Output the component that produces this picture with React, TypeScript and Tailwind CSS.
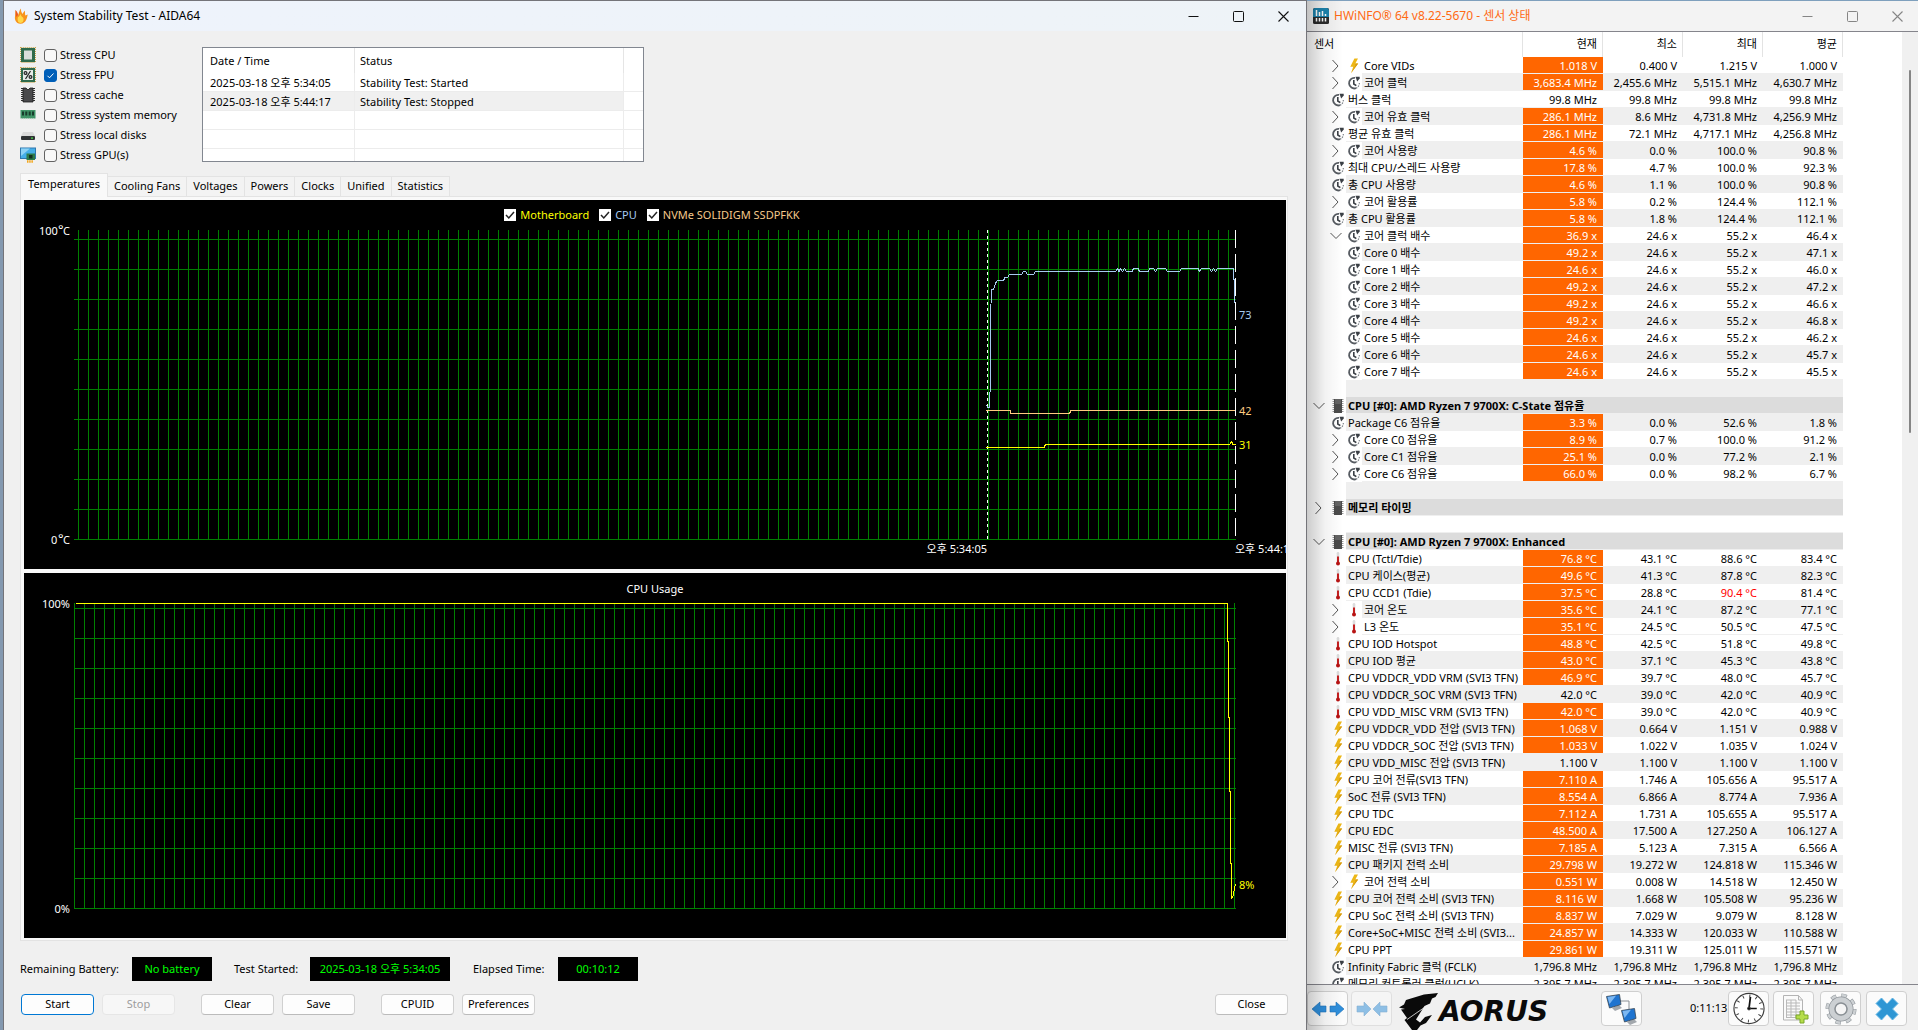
import React from 'react';
import clsx from 'clsx';

type IconKind = 'clock' | 'bolt' | 'temp';

type SensorRow = {
    kind: 'sensor' | 'group' | 'blank';
    name?: string;
    icon?: IconKind;
    nested?: boolean;
    expander?: 'open' | 'closed';
    shaded?: boolean;
    values?: string[];
    plain?: boolean;
    hotMax?: boolean;
};

const s = (
    icon: IconKind,
    name: string,
    values: string,
    shaded: boolean,
    extra: Partial<SensorRow> = {}
): SensorRow => ({ kind: 'sensor', icon, name, values: values.split('|'), shaded, ...extra });

const closed: Partial<SensorRow> = { nested: true, expander: 'closed' };
const nested: Partial<SensorRow> = { nested: true };
const plain: Partial<SensorRow> = { plain: true };

const rows: SensorRow[] = [
    s('bolt', 'Core VIDs', '1.018 V|0.400 V|1.215 V|1.000 V', false, closed),
    s('clock', '코어 클럭', '3,683.4 MHz|2,455.6 MHz|5,515.1 MHz|4,630.7 MHz', true, closed),
    s('clock', '버스 클럭', '99.8 MHz|99.8 MHz|99.8 MHz|99.8 MHz', false, plain),
    s('clock', '코어 유효 클럭', '286.1 MHz|8.6 MHz|4,731.8 MHz|4,256.9 MHz', true, closed),
    s('clock', '평균 유효 클럭', '286.1 MHz|72.1 MHz|4,717.1 MHz|4,256.8 MHz', false),
    s('clock', '코어 사용량', '4.6 %|0.0 %|100.0 %|90.8 %', true, closed),
    s('clock', '최대 CPU/스레드 사용량', '17.8 %|4.7 %|100.0 %|92.3 %', false),
    s('clock', '총 CPU 사용량', '4.6 %|1.1 %|100.0 %|90.8 %', true),
    s('clock', '코어 활용률', '5.8 %|0.2 %|124.4 %|112.1 %', false, closed),
    s('clock', '총 CPU 활용률', '5.8 %|1.8 %|124.4 %|112.1 %', true),
    s('clock', '코어 클럭 배수', '36.9 x|24.6 x|55.2 x|46.4 x', false, { nested: true, expander: 'open' }),
    s('clock', 'Core 0 배수', '49.2 x|24.6 x|55.2 x|47.1 x', true, nested),
    s('clock', 'Core 1 배수', '24.6 x|24.6 x|55.2 x|46.0 x', false, nested),
    s('clock', 'Core 2 배수', '49.2 x|24.6 x|55.2 x|47.2 x', true, nested),
    s('clock', 'Core 3 배수', '49.2 x|24.6 x|55.2 x|46.6 x', false, nested),
    s('clock', 'Core 4 배수', '49.2 x|24.6 x|55.2 x|46.8 x', true, nested),
    s('clock', 'Core 5 배수', '24.6 x|24.6 x|55.2 x|46.2 x', false, nested),
    s('clock', 'Core 6 배수', '24.6 x|24.6 x|55.2 x|45.7 x', true, nested),
    s('clock', 'Core 7 배수', '24.6 x|24.6 x|55.2 x|45.5 x', false, nested),
    { kind: 'blank', shaded: true },
    { kind: 'group', name: 'CPU [#0]: AMD Ryzen 7 9700X: C-State 점유율', expander: 'open' },
    s('clock', 'Package C6 점유율', '3.3 %|0.0 %|52.6 %|1.8 %', true),
    s('clock', 'Core C0 점유율', '8.9 %|0.7 %|100.0 %|91.2 %', false, closed),
    s('clock', 'Core C1 점유율', '25.1 %|0.0 %|77.2 %|2.1 %', true, closed),
    s('clock', 'Core C6 점유율', '66.0 %|0.0 %|98.2 %|6.7 %', false, closed),
    { kind: 'blank', shaded: true },
    { kind: 'group', name: '메모리 타이밍', expander: 'closed' },
    { kind: 'blank', shaded: false },
    { kind: 'group', name: 'CPU [#0]: AMD Ryzen 7 9700X: Enhanced', expander: 'open' },
    s('temp', 'CPU (Tctl/Tdie)', '76.8 °C|43.1 °C|88.6 °C|83.4 °C', false),
    s('temp', 'CPU 케이스(평균)', '49.6 °C|41.3 °C|87.8 °C|82.3 °C', true),
    s('temp', 'CPU CCD1 (Tdie)', '37.5 °C|28.8 °C|90.4 °C|81.4 °C', false, { hotMax: true }),
    s('temp', '코어 온도', '35.6 °C|24.1 °C|87.2 °C|77.1 °C', true, closed),
    s('temp', 'L3 온도', '35.1 °C|24.5 °C|50.5 °C|47.5 °C', false, closed),
    s('temp', 'CPU IOD Hotspot', '48.8 °C|42.5 °C|51.8 °C|49.8 °C', false),
    s('temp', 'CPU IOD 평균', '43.0 °C|37.1 °C|45.3 °C|43.8 °C', true),
    s('temp', 'CPU VDDCR_VDD VRM (SVI3 TFN)', '46.9 °C|39.7 °C|48.0 °C|45.7 °C', false),
    s('temp', 'CPU VDDCR_SOC VRM (SVI3 TFN)', '42.0 °C|39.0 °C|42.0 °C|40.9 °C', true, plain),
    s('temp', 'CPU VDD_MISC VRM (SVI3 TFN)', '42.0 °C|39.0 °C|42.0 °C|40.9 °C', false),
    s('bolt', 'CPU VDDCR_VDD 전압 (SVI3 TFN)', '1.068 V|0.664 V|1.151 V|0.988 V', true),
    s('bolt', 'CPU VDDCR_SOC 전압 (SVI3 TFN)', '1.033 V|1.022 V|1.035 V|1.024 V', false),
    s('bolt', 'CPU VDD_MISC 전압 (SVI3 TFN)', '1.100 V|1.100 V|1.100 V|1.100 V', true, plain),
    s('bolt', 'CPU 코어 전류(SVI3 TFN)', '7.110 A|1.746 A|105.656 A|95.517 A', false),
    s('bolt', 'SoC 전류 (SVI3 TFN)', '8.554 A|6.866 A|8.774 A|7.936 A', true),
    s('bolt', 'CPU TDC', '7.112 A|1.731 A|105.655 A|95.517 A', false),
    s('bolt', 'CPU EDC', '48.500 A|17.500 A|127.250 A|106.127 A', true),
    s('bolt', 'MISC 전류 (SVI3 TFN)', '7.185 A|5.123 A|7.315 A|6.566 A', false),
    s('bolt', 'CPU 패키지 전력 소비', '29.798 W|19.272 W|124.818 W|115.346 W', true),
    s('bolt', '코어 전력 소비', '0.551 W|0.008 W|14.518 W|12.450 W', false, closed),
    s('bolt', 'CPU 코어 전력 소비 (SVI3 TFN)', '8.116 W|1.668 W|105.508 W|95.236 W', true),
    s('bolt', 'CPU SoC 전력 소비 (SVI3 TFN)', '8.837 W|7.029 W|9.079 W|8.128 W', false),
    s('bolt', 'Core+SoC+MISC 전력 소비 (SVI3...', '24.857 W|14.333 W|120.033 W|110.588 W', true),
    s('bolt', 'CPU PPT', '29.861 W|19.311 W|125.011 W|115.571 W', false),
    s('clock', 'Infinity Fabric 클럭 (FCLK)', '1,796.8 MHz|1,796.8 MHz|1,796.8 MHz|1,796.8 MHz', true, plain),
    s('clock', '메모리 컨트롤러 클럭(UCLK)', '2,395.7 MHz|2,395.7 MHz|2,395.7 MHz|2,395.7 MHz', false, plain),
];

const range = (from: number, to: number, step: number) => {
    const out: number[] = [];
    for (let v = from; v <= to; v += step) out.push(v);
    return out;
};

/* ---------- sensor icons ---------- */

function SensorIcon({ kind }: { kind: IconKind }) {
    if (kind === 'clock') {
        return (
            <svg className="h-4 w-4 shrink-0" viewBox="0 0 16 16" fill="none">
                <path d="M9 2.9A5.300 5.300 0 1 0 10 13.200" stroke="#565b61" strokeWidth="1.8" />
                <path d="M10 13.2A5.300 5.300 0 0 0 13.300 8" stroke="#7d8288" strokeWidth="1.2" strokeDasharray="1.5 1" />
                <path d="M7.800 5V9L10.300 10.600" stroke="#3a3f45" strokeWidth="1.6" />
                <path d="M9.500 1.800h4.200v1.600L11.200 6.400z" fill="#3a3f45" />
            </svg>
        );
    }
    if (kind === 'bolt') {
        return (
            <svg className="h-4 w-4 shrink-0" viewBox="0 0 16 16">
                <path d="M8.4 0.500H12L9.300 5.600H12.200L5 15.200 7.200 8.800H4.300z" fill="#edb716" />
                <path d="M9.300 5.600H12.200L5 15.200 9.500 7.200z" fill="#d79a10" />
            </svg>
        );
    }
    return (
        <svg className="h-4 w-4 shrink-0" viewBox="0 0 16 16">
            <rect x="6.7" y="1" width="2.6" height="11" rx="1.3" fill="#dcdcdc" />
            <rect x="7" y="5.5" width="2" height="7" fill="#c42020" />
            <circle cx="8" cy="12.6" r="2" fill="#b81414" />
        </svg>
    );
}

function Expander({ open }: { open: boolean }) {
    return (
        <svg className="h-4 w-3 shrink-0" viewBox="0 0 12 16" fill="none" stroke="#555">
            {open ? <path d="M0.5 5L6 10.5 11.5 5" /> : <path d="M2.5 2L8 8 2.5 14" />}
        </svg>
    );
}

function ChipIcon() {
    return (
        <svg className="h-4 w-4 shrink-0" viewBox="0 0 16 16">
            <path d="M3.5 1v14M12.5 1v14" stroke="#999" strokeWidth="2" strokeDasharray="1 1" />
            <rect x="4" y="1" width="8" height="14" fill="#4b4b4b" />
            <rect x="5" y="1" width="6" height="5" fill="#636363" />
        </svg>
    );
}

/* ---------- stress option icons ---------- */

function StressIcon({ name }: { name: string }) {
    return (
        <svg className="h-4 w-4 shrink-0" viewBox="0 0 16 16">
            {(name === 'cpu' || name === 'fpu') && (
                <>
                    <rect x="0.7" y="0.7" width="14.6" height="14.6" fill="none" stroke="#c9a34a" strokeWidth="1.4" strokeDasharray="1 1" />
                    <rect x="1" y="1" width="14" height="14" fill="#2f6b4c" />
                    {name === 'cpu' && <rect x="4" y="3.5" width="8" height="9" fill="#d9dedb" />}
                    {name === 'fpu' && (
                        <>
                            <rect x="3" y="3" width="10" height="10" fill="#e6ebe6" />
                            <g fill="none" stroke="#222" strokeWidth="1.2">
                                <circle cx="5.5" cy="6" r="1.4" />
                                <circle cx="10.5" cy="10" r="1.4" />
                                <path d="M10.5 4L5.5 12" />
                            </g>
                        </>
                    )}
                </>
            )}
            {name === 'cache' && (
                <>
                    <path d="M2 1v14M14 1v14" stroke="#333" strokeWidth="2" strokeDasharray="1 1" />
                    <path d="M3 1h3l2 2 2-2h3v14H3z" fill="#4a4a4c" stroke="#1c1c1c" strokeWidth="0.8" />
                </>
            )}
            {name === 'memory' && (
                <>
                    <rect x="0.5" y="3" width="15" height="8.5" fill="#3f9467" />
                    <path d="M2 4.5h2v4H2zM5.3 4.5h2v4h-2zM8.7 4.5h2v4h-2zM12 4.5h2v4h-2z" fill="#173c2b" />
                    <path d="M1 11.7h14" stroke="#b9d6c5" strokeDasharray="1 1" />
                </>
            )}
            {name === 'disk' && (
                <>
                    <path d="M3 5h10l2 4H1z" fill="#dadada" />
                    <rect x="1" y="9" width="14" height="4" rx="1" fill="#2f3234" />
                    <rect x="11" y="10.5" width="2" height="1.2" fill="#4be04b" />
                </>
            )}
            {name === 'gpu' && (
                <>
                    <rect x="0.5" y="1" width="15" height="10.5" fill="#45aee8" stroke="#2f77ad" />
                    <path d="M1 1.5h9L1 9z" fill="#8ed2f5" />
                    <rect x="6.5" y="6.5" width="8.5" height="6.5" fill="#2c7a4b" />
                    <rect x="9" y="8" width="3.5" height="3.5" fill="#13301f" />
                    <path d="M7 14.5h6" stroke="#f2a71c" strokeWidth="2.5" strokeDasharray="1.5 0.7" />
                </>
            )}
        </svg>
    );
}

const stressOptions = [
    { id: 'cpu', label: 'Stress CPU', on: false },
    { id: 'fpu', label: 'Stress FPU', on: true },
    { id: 'cache', label: 'Stress cache', on: false },
    { id: 'memory', label: 'Stress system memory', on: false },
    { id: 'disk', label: 'Stress local disks', on: false },
    { id: 'gpu', label: 'Stress GPU(s)', on: false },
];

function StressOption({ id, label, on }: { id: string; label: string; on: boolean }) {
    return (
        <div className="flex h-5 items-center">
            <StressIcon name={id} />
            <span className="relative ml-2 flex">
                <input
                    id={id}
                    type="checkbox"
                    defaultChecked={on}
                    className="peer h-[13px] w-[13px] appearance-none rounded-[3px] border border-[#626262] bg-[#f8f8f8] checked:border-[#005fb8] checked:bg-[#005fb8]"
                />
                <svg className="pointer-events-none absolute inset-0 hidden h-[13px] w-[13px] peer-checked:block" viewBox="0 0 13 13" fill="none" stroke="#fff">
                    <path d="M3.5 6.8l2 2 4-4.3" />
                </svg>
            </span>
            <label htmlFor={id} className="ml-[3px] pt-px">{label}</label>
        </div>
    );
}

function WindowControls({ dim }: { dim?: boolean }) {
    return (
        <div className={clsx('flex', dim ? 'text-[#858585]' : 'text-[#111]')}>
            <button aria-label="Minimize" className="flex h-7 w-[45px] items-center justify-center">
                <svg width="11" height="11" viewBox="0 0 11 11" stroke="currentColor"><path d="M0.5 5.5h10" /></svg>
            </button>
            <button aria-label="Maximize" className="flex h-7 w-[45px] items-center justify-center">
                <svg width="11" height="11" viewBox="0 0 11 11" fill="none" stroke="currentColor"><rect x="0.5" y="0.5" width="10" height="10" rx="1" /></svg>
            </button>
            <button aria-label="Close window" className="flex h-7 w-[45px] items-center justify-center">
                <svg width="11" height="11" viewBox="0 0 11 11" stroke="currentColor" strokeWidth="1.1"><path d="M0.5 0.5l10 10M10.5 0.5l-10 10" /></svg>
            </button>
        </div>
    );
}

/* ---------- charts ---------- */

const cpuTrace =
    '986.5,405.5 988,407.5 989.5,407.5 990.5,378 990.5,319 991.5,289.5 993.5,289.5 995,285 996,282.5 997.5,280.5 1003.5,280.5 1005,277.5 1007.5,277.5 1009.5,274.5 1021.5,274.5 1023.5,271.5 1025.5,271.5 1027.5,274.5 1033.5,274.5 1035.5,271.5 1115.5,271.5 1117.5,268.5 1119,271.5 1120.5,268.5 1122.5,271.5 1124.5,268.5 1126.5,271.5 1132,271.5 1133.5,268.5 1138,268.5 1139.5,271.5 1148,271.5 1150,268.5 1153.5,268.5 1155.5,271.5 1157.5,268.5 1165.5,268.5 1167.5,271.5 1179.5,271.5 1181.5,268.5 1198,268.5 1199.5,271.5 1201.5,268.5 1209.5,268.5 1211.5,271.5 1213.5,268.5 1215.5,271.5 1217.5,268.5 1233.5,268.5 1233.5,279.5 1234.5,280 1234.5,302.5';

function TemperatureChart() {
    return (
        <div className="overflow-hidden bg-black">
            <div className="flex h-6 items-end justify-center gap-2.5 pr-1.5 pb-px">
                <ChartToggle label="Motherboard" className="text-[#ffff00]" />
                <ChartToggle label="CPU" className="text-[#a6caf0]" />
                <ChartToggle label="NVMe SOLIDIGM SSDPFKK" className="text-[#f5c98b]" />
            </div>
            <svg className="block h-auto w-full overflow-visible" viewBox="24 224 1262 345" fontSize="11">
                <g stroke="#008000" shapeRendering="crispEdges">
                    {range(78, 1228, 10).map((x) => (
                        <line key={x} x1={x + 0.5} x2={x + 0.5} y1="230" y2="540" />
                    ))}
                    {range(239, 539, 30).map((y) => (
                        <line key={y} x1="74" x2="1236" y1={y + 0.5} y2={y + 0.5} />
                    ))}
                </g>
                <g stroke="#fff" shapeRendering="crispEdges">
                    <line x1="987.5" x2="987.5" y1="230" y2="540" strokeDasharray="3 3" />
                    <line x1="1235.5" x2="1235.5" y1="230" y2="540" strokeDasharray="18 6" />
                </g>
                <g fill="none" shapeRendering="crispEdges">
                    <polyline points={cpuTrace} stroke="#a6caf0" />
                    <polyline points="986,410.5 1010,410.5 1011,413.5 1069.5,413.5 1071,410.5 1235,410.5" stroke="#ffcc80" />
                    <polyline points="986,447.5 1044,447.5 1045.5,444.5 1229.5,444.5 1231.5,441.5 1233,444.5 1236,444.5" stroke="#ffff00" />
                </g>
                <g fill="#fff">
                    <text x="39" y="235">100<tspan x="58" y="234" fontSize="13">°</tspan><tspan x="63" y="235">C</tspan></text>
                    <text x="51" y="544">0<tspan x="58" y="543" fontSize="13">°</tspan><tspan x="63" y="544">C</tspan></text>
                    <text x="987" y="553" textAnchor="end">오후 5:34:05</text>
                    <text x="1235" y="553">오후 5:44:17</text>
                </g>
                <text x="1239" y="319" fill="#a6caf0">73</text>
                <text x="1239" y="415" fill="#ffcc80">42</text>
                <text x="1239" y="449" fill="#ffff00">31</text>
            </svg>
        </div>
    );
}

function ChartToggle({ label, className }: { label: string; className: string }) {
    return (
        <label className={clsx('flex h-4 items-center gap-1', className)}>
            <span className="relative flex">
                <input type="checkbox" defaultChecked className="peer h-3 w-3 appearance-none bg-white" />
                <svg className="pointer-events-none absolute inset-0 hidden h-3 w-3 peer-checked:block" viewBox="0 0 12 12" fill="none" stroke="#222" strokeWidth="1.5">
                    <path d="M2 6l2.8 3L10 3" />
                </svg>
            </span>
            {label}
        </label>
    );
}

function UsageChart() {
    return (
        <div className="overflow-hidden bg-black">
            <h2 className="flex h-6 items-end justify-center text-white">CPU Usage</h2>
            <svg className="block h-auto w-full overflow-visible" viewBox="24 597 1262 341" fontSize="11">
                <g stroke="#008000" shapeRendering="crispEdges">
                    {range(74, 1234, 10).map((x) => (
                        <line key={x} x1={x + 0.5} x2={x + 0.5} y1="603" y2="909" />
                    ))}
                    {range(608, 908, 30).map((y) => (
                        <line key={y} x1="74" x2="1236" y1={y + 0.5} y2={y + 0.5} />
                    ))}
                </g>
                <polyline
                    points="76,603.5 1227.5,603.5 1227.5,641 1228.5,642 1228.5,717 1229.5,718 1229.5,791 1230.5,792 1230.5,863 1231.5,864 1231.5,899 1233.5,895 1234.5,888 1235.5,884"
                    fill="none"
                    stroke="#ffff00"
                    shapeRendering="crispEdges"
                />
                <text x="70" y="608" fill="#fff" textAnchor="end">100%</text>
                <text x="70" y="913" fill="#fff" textAnchor="end">0%</text>
                <text x="1239" y="889" fill="#ffff00">8%</text>
            </svg>
        </div>
    );
}

const tabs = ['Cooling Fans', 'Voltages', 'Powers', 'Clocks', 'Unified', 'Statistics'];

const log = [
    ['2025-03-18 오후 5:34:05', 'Stability Test: Started'],
    ['2025-03-18 오후 5:44:17', 'Stability Test: Stopped'],
    ['', ''],
    ['', ''],
];

function EventLog() {
    return (
        <div className="mt-0.5 h-[115px] w-[442px] overflow-hidden border border-[#828790] bg-white">
            <table className="w-full table-fixed border-separate border-spacing-0">
                <colgroup>
                    <col className="w-[152px]" />
                    <col className="w-[269px]" />
                    <col />
                </colgroup>
                <thead>
                    <tr className="h-[25px] text-left">
                        <th className="border-r border-[#e5e5e5] p-0 pt-0.5 pl-[7px] font-normal">Date / Time</th>
                        <th className="border-r border-[#e5e5e5] p-0 pt-0.5 pl-[5px] font-normal">Status</th>
                        <th className="p-0" />
                    </tr>
                </thead>
                <tbody>
                    {log.map(([time, status], i) => (
                        <tr key={i} className={clsx('h-[19px]', i === 1 && 'bg-[#f0f0f0]')}>
                            <td className="border-r border-b border-[#ececec] p-0 pt-0.5 pl-[7px] leading-4">{time}</td>
                            <td className="border-r border-b border-[#ececec] p-0 pt-0.5 pl-[5px] leading-4">{status}</td>
                            <td className="border-b border-[#ececec] bg-white p-0" />
                        </tr>
                    ))}
                    <tr className="h-[19px]">
                        <td className="border-r border-[#ececec] p-0" />
                        <td className="border-r border-[#ececec] p-0" />
                        <td className="p-0" />
                    </tr>
                </tbody>
            </table>
        </div>
    );
}

function Button({ children, className }: { children: React.ReactNode; className?: string }) {
    return (
        <button
            disabled={children === 'Stop'}
            className={clsx(
                'flex h-[21px] w-[73px] items-center justify-center rounded border whitespace-nowrap disabled:border-[#e6e6e6] disabled:bg-[#f7f7f7] disabled:text-[#9d9d9d]',
                className ?? 'border-[#d0d0d0] border-b-[#bbb] bg-[#fdfdfd]'
            )}
        >
            {children}
        </button>
    );
}

function StabilityWindow() {
    return (
        <section className="flex min-w-0 flex-1 flex-col border-t border-r border-l border-[#747479] bg-[#f0f0f0]">
            <header className="flex h-[30px] shrink-0 items-center bg-gradient-to-r from-[#eef3fc] to-[#eef3f7] pl-2.5">
                <svg className="h-4 w-3.5" viewBox="0 0 14 16">
                    <path d="M1.5 2C3 4 3.8 5 4 7 5 5.5 5 3 6.8 0.5 7 3 7.5 4.500 8.500 6 9 4.500 10.500 3.500 11 2.500 11 5 11 6 11.300 7.500L13.800 6.500C13 9 12.500 15.500 6.500 15.800 1.500 15.500 0.500 11 1 8.500z" fill="#f7941d" />
                    <path d="M4 9c1 0 1.5-1 2.5-3 .5 2 1.500 3 2.500 3.500C10.500 12 9 15 6.500 15S3 12 4 9z" fill="#ffd84a" />
                    <path d="M1.5 2C3 4 3.8 5 4 7L2 9z" fill="#e8562a" />
                </svg>
                <h1 className="ml-1.5 text-xs">System Stability Test - AIDA64</h1>
                <div className="ml-auto">
                    <WindowControls />
                </div>
            </header>
            <div className="flex flex-1 flex-col pt-3.5 pr-[18px] pl-4">
                <div className="flex">
                    <div className="w-[182px]">
                        {stressOptions.map((o) => (
                            <StressOption key={o.id} {...o} />
                        ))}
                    </div>
                    <EventLog />
                </div>

                <nav className="mt-2 flex items-end" role="tablist">
                    <button role="tab" aria-selected="true" className="relative -mb-px flex h-6 w-[88px] items-center justify-center border border-b-0 border-[#e3e3e3] bg-[#f9f9f9] pb-0.5">
                        Temperatures
                    </button>
                    {tabs.map((t) => (
                        <button
                            key={t}
                            role="tab"
                            aria-selected="false"
                            className="flex h-5 items-center border-t border-r border-[#e3e3e3] bg-[#f3f3f3] px-1.5"
                        >
                            {t}
                        </button>
                    ))}
                </nav>
                <div className="flex flex-col gap-1 border border-[#e3e3e3] bg-[#f9f9f9] pt-[3px] pr-px pb-0.5 pl-[3px]">
                    <TemperatureChart />
                    <UsageChart />
                </div>

                <div className="mt-4 flex h-6 items-center">
                    <span className="w-28">Remaining Battery:</span>
                    <output className="flex h-6 w-20 items-center justify-center bg-black text-[#00ff00]">No battery</output>
                    <span className="ml-[22px] w-[76px]">Test Started:</span>
                    <output className="flex h-6 w-[140px] items-center justify-center bg-black text-[#00ff00]">2025-03-18 오후 5:34:05</output>
                    <span className="ml-[23px] w-[85px]">Elapsed Time:</span>
                    <output className="flex h-6 w-20 items-center justify-center bg-black text-[#00ff00]">00:10:12</output>
                </div>
                <div className="mt-[13px] flex gap-[26px] pl-px">
                    <div className="flex gap-2">
                        <Button className="border-[#0078d4] bg-[#fdfdfd]">Start</Button>
                        <Button>Stop</Button>
                    </div>
                    <div className="flex gap-2">
                        <Button>Clear</Button>
                        <Button>Save</Button>
                    </div>
                    <div className="flex gap-2">
                        <Button>CPUID</Button>
                        <Button>Preferences</Button>
                    </div>
                    <div className="ml-auto">
                        <Button>Close</Button>
                    </div>
                </div>
            </div>
        </section>
    );
}

/* ---------- sensor window ---------- */

function NameCell({ row }: { row: SensorRow }) {
    const group = row.kind === 'group';
    return (
        <div className="flex h-[17px] items-center">
            <span className="flex w-[23px] shrink-0 pl-1.5">{group && <Expander open={row.expander === 'open'} />}</span>
            {row.nested && (
                <span className="flex w-4 shrink-0">{row.expander && <Expander open={row.expander === 'open'} />}</span>
            )}
            <span className="flex w-4 shrink-0">
                {row.icon && <SensorIcon kind={row.icon} />}
                {group && <ChipIcon />}
            </span>
            <span
                className={clsx(
                    'h-[17px] min-w-0 flex-1 truncate border-b border-[#efefef] pl-0.5 leading-[18px]',
                    group && 'bg-[#dcdcdc] font-bold',
                    row.shaded && 'bg-[#efefef]'
                )}
            >
                {row.name}
            </span>
        </div>
    );
}

function SensorTable() {
    return (
        <table className="w-[536px] shrink-0 table-fixed border-separate border-spacing-0 self-start">
            <colgroup>
                <col />
                <col className="w-20" />
                <col className="w-20" />
                <col className="w-20" />
                <col className="w-20" />
            </colgroup>
            <thead>
                <tr className="h-[25px]">
                    <th className="border-r border-[#e3e3e3] p-0 pl-[7px] text-left font-normal">센서</th>
                    {['현재', '최소', '최대', '평균'].map((h) => (
                        <th key={h} className="border-r border-[#e3e3e3] p-0 pr-[5px] text-right font-normal">{h}</th>
                    ))}
                </tr>
            </thead>
            <tbody>
                {rows.map((row, i) =>
                    row.kind === 'sensor' ? (
                        <tr key={i} className="h-[17px]">
                            <td className="p-0"><NameCell row={row} /></td>
                            {row.values!.map((v, c) => (
                                <td
                                    key={c}
                                    className={clsx(
                                        'h-[17px] border-b border-[#efefef] p-0 pt-0.5 pr-1.5 text-right leading-[14px] whitespace-nowrap',
                                        c === 0 && !row.plain ? 'bg-[#ff6600] text-white' : row.shaded && 'bg-[#efefef]',
                                        c === 2 && row.hotMax && 'text-[#ff0000]'
                                    )}
                                >
                                    {v}
                                </td>
                            ))}
                        </tr>
                    ) : (
                        <tr key={i} className="h-[17px]">
                            <td colSpan={5} className="p-0"><NameCell row={row} /></td>
                        </tr>
                    )
                )}
            </tbody>
        </table>
    );
}

function ToolButton({ label, faded, children }: { label: string; faded?: boolean; children: React.ReactNode }) {
    return (
        <button
            aria-label={label}
            className={clsx(
                'flex h-[35px] w-[41px] shrink-0 items-center justify-center rounded border border-[#cfcfcf] bg-[#fbfbfb]',
                faded && 'opacity-50'
            )}
        >
            {children}
        </button>
    );
}

function Toolbar() {
    return (
        <footer className="flex h-[46px] shrink-0 items-center border-t border-[#85858c] bg-[#f0f0f0] pt-0.5 pr-[11px]">
            <div className="flex gap-[3px]">
                <ToolButton label="Expand">
                    <svg width="34" height="18" viewBox="0 0 34 18" fill="#2f8fdc" stroke="#1b6fb5" strokeWidth="0.6">
                        <path d="M1 9L9 2v4h6v6H9v4z" />
                        <path d="M33 9l-8-7v4h-6v6h6v4z" />
                    </svg>
                </ToolButton>
                <ToolButton label="Collapse" faded>
                    <svg width="34" height="18" viewBox="0 0 34 18" fill="#2f8fdc" stroke="#1b6fb5" strokeWidth="0.6">
                        <path d="M16 9L9 2v4H2v6h7v4z" />
                        <path d="M18 9l7-7v4h7v6h-7v4z" />
                    </svg>
                </ToolButton>
            </div>
            <div className="ml-[7px] flex h-[43px] items-end">
                <svg className="h-[37px] w-10" viewBox="0 0 40 37">
                    <path d="M0 14.5L5 11.5 7 7 25 1.5 39 0 36.5 4 33 5.5 31 10.5 25.500 13 17 26.500 21 29.500 26 24 33 22 27 30 21.500 32.500 18 37H13L5.500 27 8 25 2 16.500 6 16z" fill="#0a0a0a" />
                    <path d="M8 26.5L27.5 13" stroke="#f0f0f0" strokeWidth="0.8" />
                </svg>
                <span className="font-['DejaVu_Sans'] text-[28px] leading-9 font-bold text-[#0a0a0a] italic">AORUS</span>
            </div>
            <div className="ml-auto flex items-center">
                <ToolButton label="Remote">
                    <svg width="34" height="32" viewBox="0 0 34 32">
                        <path d="M15 8h9v8" fill="none" stroke="#8a8f94" />
                        <path d="M7 15l7-3 3 3-7 3z" fill="#a3a8ad" />
                        <path d="M1.500 3.500L14.500 1.500l1.500 10-11.500 3.500z" fill="#1f74d0" stroke="#3a4652" strokeWidth="0.8" />
                        <path d="M2.500 4L11 2.800 4.500 11z" fill="#7db8f2" />
                        <path d="M22 29l7-3 3 3-7 3z" fill="#a3a8ad" />
                        <path d="M16.500 17.500l13-2 1.500 10L19.500 29z" fill="#1f74d0" stroke="#3a4652" strokeWidth="0.8" />
                        <path d="M17.500 18l8.500-1.200-6.500 8.200z" fill="#7db8f2" />
                    </svg>
                </ToolButton>
                <time className="mr-0.5 ml-12 w-9 text-[11px]">0:11:13</time>
                <div className="flex gap-1">
                    <ToolButton label="Reset clock">
                        <svg width="34" height="33" viewBox="0 0 34 34" fill="none" stroke="#3d3d3d">
                            <circle cx="17" cy="17" r="15.5" fill="#fff" strokeWidth="1.2" />
                            <circle cx="17" cy="17" r="13" strokeWidth="3" strokeDasharray="1 5.807" />
                            <path d="M18.5 5L17 17h8" stroke="#111" strokeWidth="1.8" />
                            <circle cx="17" cy="17" r="1.5" fill="#111" />
                        </svg>
                    </ToolButton>
                    <ToolButton label="Log to file">
                        <svg width="30" height="30" viewBox="0 0 30 30">
                            <path d="M4.5 1.5h15l4 4.500v20h-19z" fill="#fafafa" stroke="#b4b4b4" />
                            <path d="M19.5 1.5V6h4" fill="none" stroke="#b4b4b4" />
                            <path d="M7 6h10M7 9h14M7 12h14M7 15h14M7 18h14M7 21h14M7 23.5h10M7.5 6v17.500M12 6v17.500M17 6v17.500" stroke="#b9b9b9" fill="none" />
                            <path d="M21 17h4v4h4v4h-4v4h-4v-4h-4v-4h4z" fill="#b5dd4a" stroke="#7ba728" />
                        </svg>
                    </ToolButton>
                </div>
                <div className="ml-1.5 flex gap-[5px]">
                    <ToolButton label="Settings">
                        <svg width="32" height="32" viewBox="0 0 32 32">
                            <circle cx="16" cy="16" r="13" fill="none" stroke="#8e9499" strokeWidth="5" strokeDasharray="5.2 5.01" />
                            <circle cx="16" cy="16" r="13" fill="none" stroke="#cdd1d4" strokeWidth="4" strokeDasharray="4.4 5.81" strokeDashoffset="-0.4" />
                            <circle cx="16" cy="16" r="9" fill="none" stroke="#8e9499" strokeWidth="7" />
                            <circle cx="16" cy="16" r="9" fill="none" stroke="#ccd0d3" strokeWidth="5.5" />
                            <circle cx="16" cy="16" r="6" fill="#f5f5f5" stroke="#8a9095" strokeWidth="1.5" />
                        </svg>
                    </ToolButton>
                    <ToolButton label="Close sensors">
                        <svg width="26" height="26" viewBox="0 0 26 26">
                            <path d="M7.5 2L13 8l5.500-6L24 7.500 18.500 13 24 18.500 18.500 24 13 18l-5.500 6L2 18.500 7.500 13 2 7.500z" fill="#2e96d4" stroke="#5fb4e4" />
                        </svg>
                    </ToolButton>
                </div>
            </div>
        </footer>
    );
}

function SensorWindow() {
    return (
        <section className="relative flex w-[611px] shrink-0 flex-col border-t border-[#7fa0bd] bg-white">
            <header className="flex h-[31px] shrink-0 items-center border-b border-[#85858c] bg-[#f3f3f3] pl-1.5">
                <svg className="h-4 w-4" viewBox="0 0 16 16">
                    <rect width="16" height="16" rx="1.5" fill="#2b2b2b" />
                    <path d="M1.5 0h13L16 1.500V9H0V1.500z" fill="#1c83ad" />
                    <path d="M3.5 2v6M6.5 4v4M9.5 3v5M12.5 6v2" stroke="#fff" strokeWidth="1.5" />
                    <path d="M3.5 10v3.5M6.5 10v3.500M9.500 10v3.500M12.500 10v3.500" stroke="#fff" strokeWidth="1.5" />
                </svg>
                <h1 className="ml-[5px] text-xs text-[#ff6a13]">HWiNFO® 64 v8.22-5670 - 센서 상태</h1>
                <div className="-mr-0.5 ml-auto">
                    <WindowControls dim />
                </div>
            </header>
            <div className="flex min-h-0 flex-1 overflow-hidden">
                <SensorTable />
                <div className="flex-1" />
                <div className="flex w-4 shrink-0 justify-center bg-[#f0f0f0] pt-[38px]">
                    <div className="h-[363px] w-0.5 rounded bg-[#858585]" />
                </div>
            </div>
            <Toolbar />
            {/* shade cast by the neighbouring window */}
            <div className="pointer-events-none absolute inset-y-0 left-0 w-9 bg-gradient-to-r from-black/20 via-black/5 to-transparent" />
        </section>
    );
}

export default function App() {
    return (
        <main className="flex h-screen overflow-hidden bg-[#8499b0] pl-[3px] font-['Noto_Sans','Noto_Sans_CJK_KR',sans-serif] text-[11px] text-black">
            <StabilityWindow />
            <SensorWindow />
        </main>
    );
}
